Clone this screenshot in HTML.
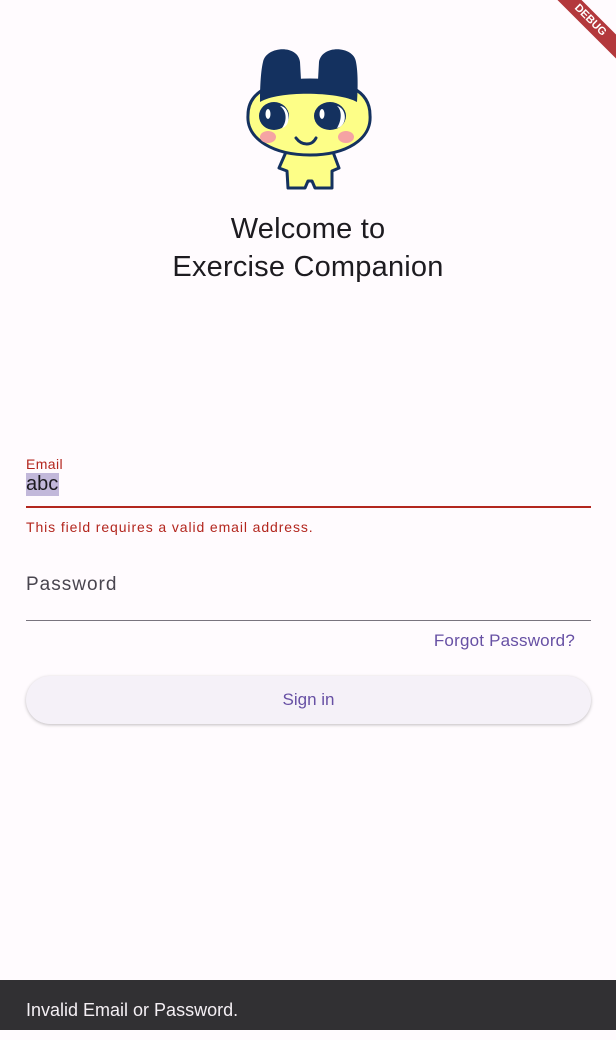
<!DOCTYPE html>
<html><head><meta charset="utf-8"><style>
html,body{margin:0;padding:0}
body{width:616px;height:1030px;background:#fffbfe;position:relative;overflow:hidden;font-family:"Liberation Sans",Roboto,sans-serif;}
.abs{position:absolute}
.title{left:0;width:616px;text-align:center;font-size:29px;color:#1d1b20;line-height:38px;top:210px;letter-spacing:0.2px}
.debug{width:150px;height:17px;background:#b3383c;transform:rotate(45deg);color:#fff;font-size:11px;font-weight:bold;text-align:center;line-height:17px;transform-origin:center}
</style></head><body>
<div class="abs debug" style="right:-49px;top:12px;">DEBUG</div>
<svg class="abs" style="left:230px;top:40px" width="160" height="160" viewBox="0 0 160 160">
 <g stroke="#14315f" stroke-width="3" stroke-linejoin="round">
  <path d="M56 112 L49 128 L57 131 L58 148 L75 148 L78 141 L82 141 L85 148 L102 148 L102 131 L109 128 L103 112 Z" fill="#fdfe87"/>
  <path d="M18 75 C18 50 45 40 80 40 C115 40 140 50 140 75 C142 100 115 115 80 115 C45 115 16 100 18 75 Z" fill="#fdfe87"/>
 </g>
 <path d="M30 62 C30 45 31 30 33 22 C36 6 68 4 70 22 L71 40 L88 40 L89 22 C92 4 124 6 126 22 C128 32 128 48 127 62 C110 52 50 50 30 62 Z" fill="#14315f"/>
 <ellipse cx="44" cy="76" rx="15" ry="14" fill="#14315f"/>
 <ellipse cx="100" cy="76" rx="16" ry="14" fill="#14315f"/>
 <path d="M50 66 C60 66 62 86 52 88 C58 80 56 70 50 66Z" fill="#fff"/>
 <path d="M107 66 C117 68 118 86 107 88 C112 80 112 70 107 66Z" fill="#fff"/>
 <ellipse cx="38" cy="74" rx="2.5" ry="5" fill="#fff"/>
 <ellipse cx="92" cy="74" rx="2.5" ry="5" fill="#fff"/>
 <ellipse cx="38" cy="97" rx="8" ry="6" fill="#f5a3a3"/>
 <ellipse cx="116" cy="97" rx="8" ry="6" fill="#f5a3a3"/>
 <path d="M66 98 C72 106 82 106 86 98" stroke="#14315f" stroke-width="3" fill="none" stroke-linecap="round"/>
</svg>
<div class="abs title">Welcome to<br>Exercise Companion</div>
<div class="abs" style="left:26px;top:456px;font-size:14px;color:#b3261e;letter-spacing:0.4px">Email</div>
<div class="abs" style="left:26px;top:473px;font-size:20px;color:#1d1b20;background:#c2b8da;line-height:23px;padding:0 1px 0 0">abc</div>
<div class="abs" style="left:26px;top:506px;width:565px;height:2px;background:#b3261e"></div>
<div class="abs" style="left:26px;top:519px;font-size:14px;color:#b3261e;letter-spacing:0.9px">This field requires a valid email address.</div>
<div class="abs" style="left:26px;top:574px;font-size:19px;color:#49454f;letter-spacing:1px">Password</div>
<div class="abs" style="left:26px;top:620px;width:565px;height:1px;background:#79747e"></div>
<div class="abs" style="right:41px;top:631px;font-size:17px;color:#6750a4;letter-spacing:0.2px">Forgot Password?</div>
<div class="abs" style="left:26px;top:676px;width:565px;height:48px;border-radius:24px;background:#f5f1f8;box-shadow:0 1px 3px rgba(0,0,0,0.25);text-align:center;line-height:48px;font-size:17px;color:#6750a4">Sign in</div>
<div class="abs" style="left:0;top:980px;width:616px;height:50px;background:#313033;color:#f4eff4;font-size:18px;line-height:60px;padding-left:26px;box-sizing:border-box">Invalid Email or Password.</div>
</body></html>
